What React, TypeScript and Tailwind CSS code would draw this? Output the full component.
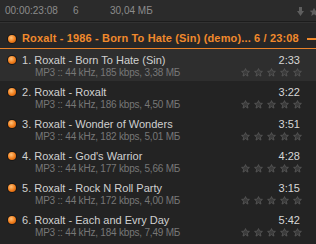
import React from 'react'

type Track = { n: number; title: string; info: string; dur: string }

const TRACKS: Track[] = [
  { n: 1, title: 'Roxalt - Born To Hate (Sin)', info: 'MP3 :: 44 kHz, 185 kbps, 3,38 МБ', dur: '2:33' },
  { n: 2, title: 'Roxalt - Roxalt', info: 'MP3 :: 44 kHz, 186 kbps, 4,50 МБ', dur: '3:22' },
  { n: 3, title: 'Roxalt - Wonder of Wonders', info: 'MP3 :: 44 kHz, 182 kbps, 5,01 МБ', dur: '3:51' },
  { n: 4, title: "Roxalt - God's Warrior", info: 'MP3 :: 44 kHz, 177 kbps, 5,66 МБ', dur: '4:28' },
  { n: 5, title: 'Roxalt - Rock N Roll Party', info: 'MP3 :: 44 kHz, 172 kbps, 4,00 МБ', dur: '3:15' },
  { n: 6, title: 'Roxalt - Each and Evry Day', info: 'MP3 :: 44 kHz, 184 kbps, 7,49 МБ', dur: '5:42' },
]

function Ball() {
  return (
    <span className="w-[10px] h-[10px] rounded-full bg-[#161616] flex items-center justify-center shrink-0">
      <span className="w-[8px] h-[8px] rounded-full bg-[radial-gradient(circle_at_40%_35%,#ffc27a,#f07c1a_55%,#b0500c)]" />
    </span>
  )
}

function Star() {
  return (
    <svg width="9" height="9" viewBox="0 0 12 12">
      <path d="M6 0.8 L7.5 4.2 L11.2 4.5 L8.4 7 L9.3 10.8 L6 8.8 L2.7 10.8 L3.6 7 L0.8 4.5 L4.5 4.2 Z"
        fill="#3a3a3a" stroke="#575757" strokeWidth="1.2" strokeLinejoin="round" />
    </svg>
  )
}

export default function App() {
  return (
    <div className="w-[316px] h-[244px] bg-[#232323] overflow-hidden" style={{ fontFamily: '"Liberation Sans", Arial, sans-serif' }}>
      {/* top bar */}
      <div className="h-[22px] bg-[#2b2b2b] border-b border-[#1c1c1c] flex items-center text-[10px] text-[#8c8c8c] pl-[5px] relative">
        <span className="w-[68px]">00:00:23:08</span>
        <span className="w-[37px]">6</span>
        <span>30,04 МБ</span>
        <svg className="absolute left-[297px] top-[7px]" width="7" height="9" viewBox="0 0 7 9">
          <path d="M2 0 H5 V4 H7 L3.5 9 L0 4 H2 Z" fill="#5e5e5e" />
        </svg>
        <svg className="absolute left-[309px] top-[7px]" width="10" height="10" viewBox="0 0 12 12">
          <path d="M6 0.8 L7.5 4.2 L11.2 4.5 L8.4 7 L9.3 10.8 L6 8.8 L2.7 10.8 L3.6 7 L0.8 4.5 L4.5 4.2 Z" fill="#5e5e5e" />
        </svg>
      </div>
      {/* header */}
      <div className="h-[27px] bg-[#272727] border-t border-[#323232] border-b border-b-[#e8822a] flex items-center pl-[7px] pt-[6px] gap-[5px] relative">
        <Ball />
        <span className="text-[#f0892c] font-bold text-[11px] tracking-[0.15px] whitespace-nowrap">Roxalt - 1986 - Born To Hate (Sin) (demo)... 6 / 23:08</span>
        <span className="absolute left-[307px] top-[15px] w-[9px] h-[2px] bg-[#f0892c]" />
      </div>
      {/* list */}
      <div>
        {TRACKS.map(t => (
          <div key={t.n} className={`h-[32px] flex pl-[7px] pr-[14px] ${t.n === 1 ? 'bg-[#2e2e2e]' : ''}`}>
            <div className="pt-[6px]"><Ball /></div>
            <div className="flex-1 pl-[5px] pt-[4px]">
              <div className="text-[#d0d0d0] text-[11px] leading-[14px]">{t.n}. {t.title}</div>
              <div className="text-[#777] text-[10px] tracking-[-0.2px] leading-[12px] pl-[13px]">{t.info}</div>
            </div>
            <div className="flex flex-col items-end pt-[4px]">
              <div className="text-[#d6d6d6] text-[11px] leading-[14px] mr-[2px]">{t.dur}</div>
              <div className="flex gap-[4px] mt-[1px]">
                <Star /><Star /><Star /><Star /><Star />
              </div>
            </div>
          </div>
        ))}
      </div>
    </div>
  )
}
